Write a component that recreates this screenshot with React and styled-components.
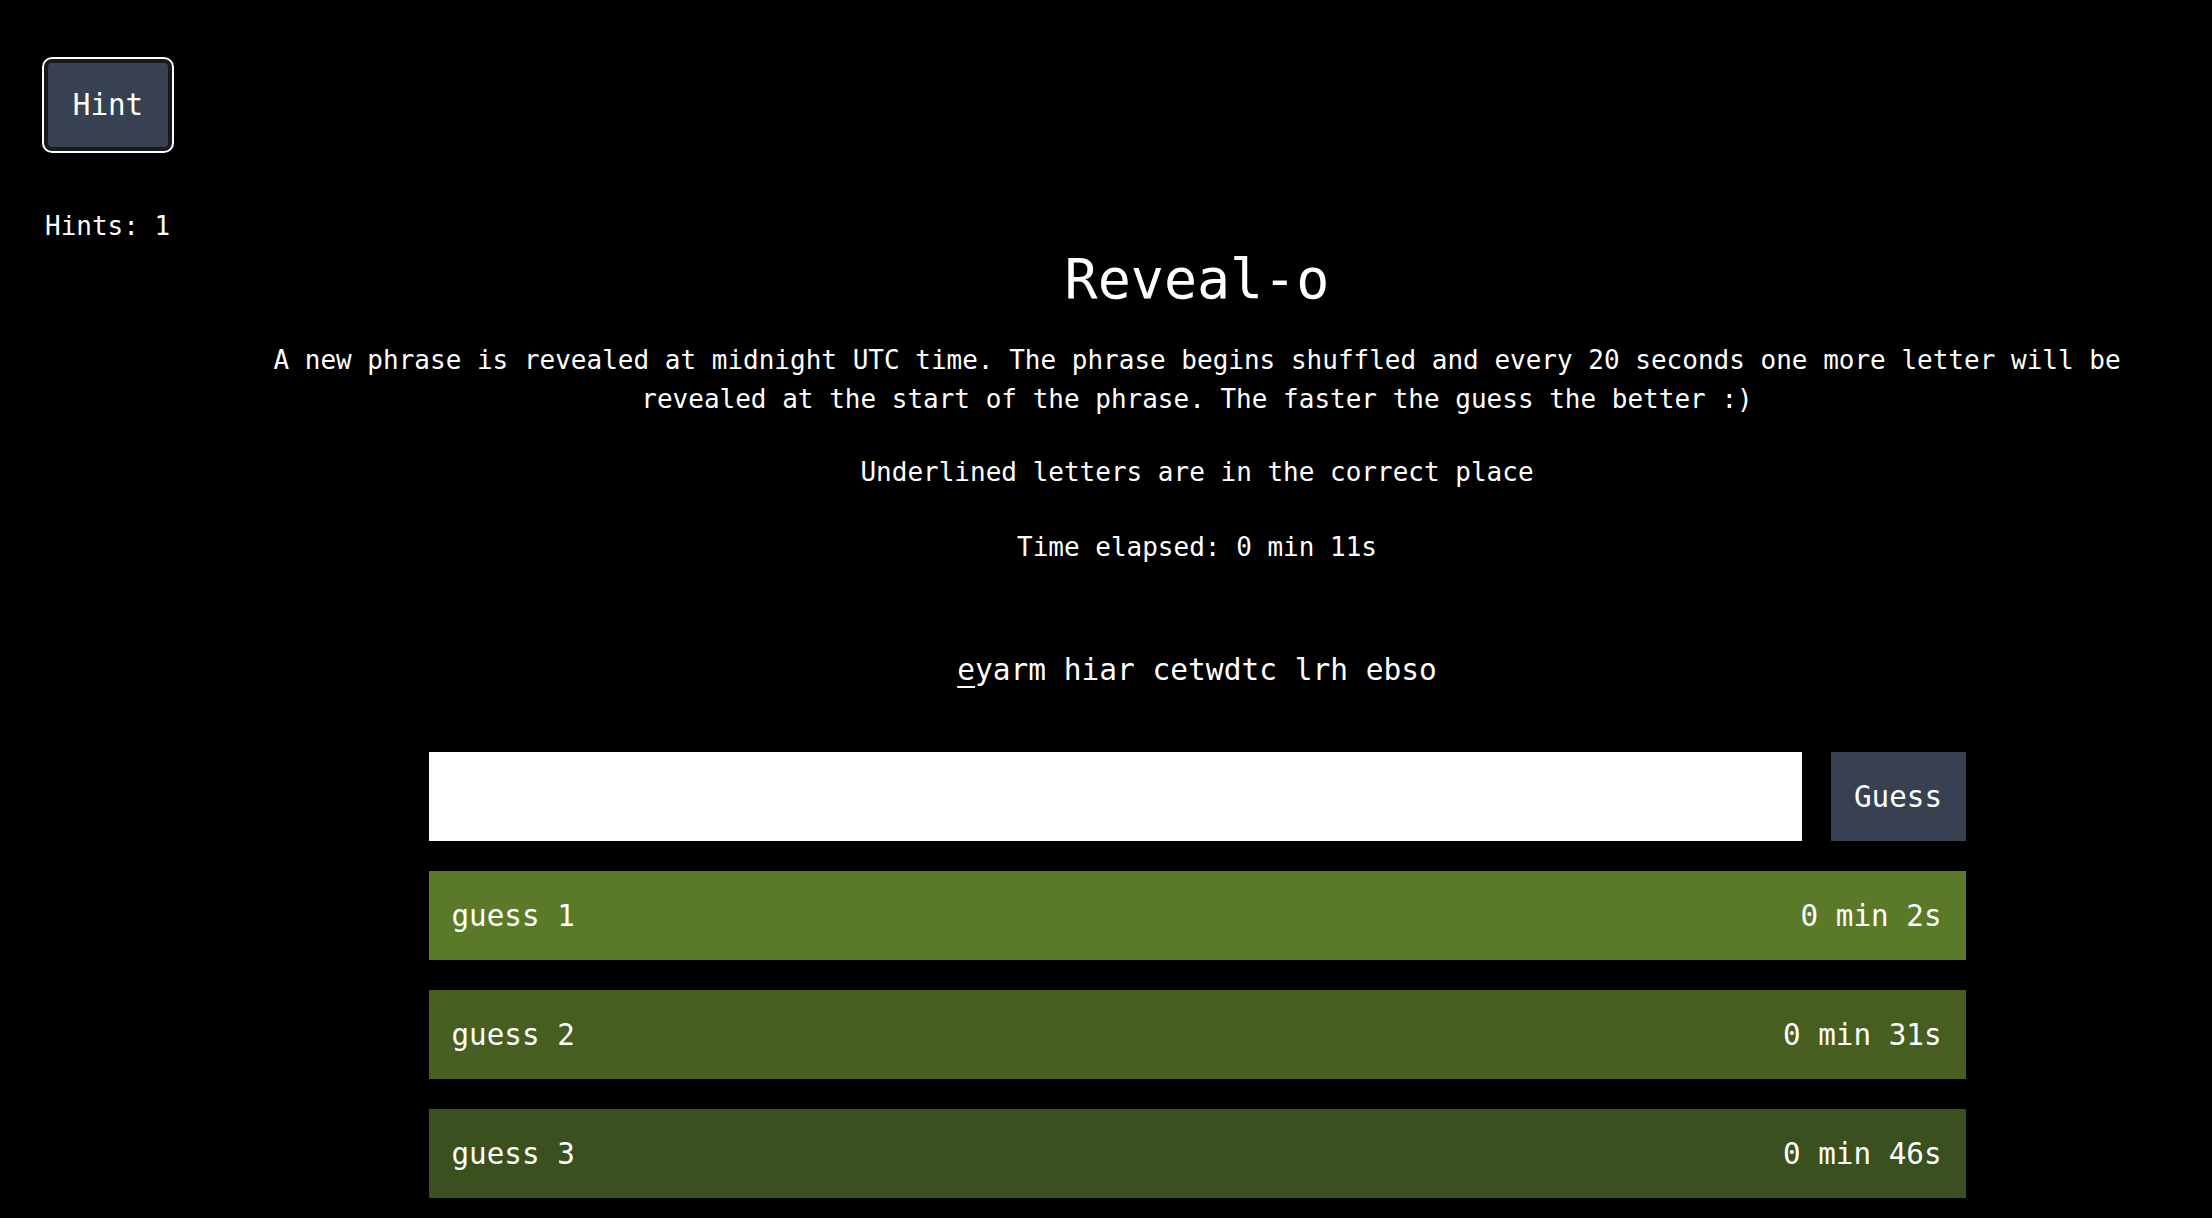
import React from 'react'
import styled, { createGlobalStyle } from 'styled-components'

const GlobalStyle = createGlobalStyle`
    html, body {
        margin: 0;
        padding: 0;
        background: #000000;
        color: #ffffff;
        font-family: "DejaVu Sans Mono", "Liberation Mono", monospace;
    }
`

const Page = styled.div`
    display: flex;
    min-height: 1218px;
    background: #000000;
`

const Sidebar = styled.aside`
    width: 182px;
    flex-shrink: 0;
    box-sizing: border-box;
    padding: 59px 0 0 44px;
    display: flex;
    flex-direction: column;
    align-items: flex-start;
`

const HintButton = styled.button`
    width: 128px;
    height: 92px;
    box-sizing: border-box;
    background: #374151;
    color: #ffffff;
    border: 4px solid #1a1a1c;
    border-radius: 8px;
    box-shadow: 0 0 0 2px #ffffff;
    font-family: inherit;
    font-size: 29.25px;
    cursor: pointer;
`

const HintCount = styled.div`
    margin-top: 56px;
    margin-left: 1px;
    font-size: 26px;
    line-height: 39px;
`

const Main = styled.main`
    flex: 1;
    box-sizing: border-box;
    padding: 246px 64px 0;
    display: flex;
    flex-direction: column;
    align-items: center;
    text-align: center;
`

const Title = styled.h1`
    margin: 0;
    font-size: 55px;
    line-height: 66px;
    font-weight: normal;
`

const Paragraph = styled.p`
    margin: ${p => p.$top}px 0 0;
    font-size: 26px;
    line-height: 39px;
`

const Phrase = styled.div`
    margin-top: 81px;
    font-size: 29.5px;
    line-height: 44px;
`

const Correct = styled.span`
    text-decoration: underline;
    text-underline-offset: 6px;
    text-decoration-thickness: 2px;
`

const Board = styled.div`
    width: 1537px;
    margin-top: 60px;
    display: flex;
    flex-direction: column;
    gap: 30px;
`

const GuessForm = styled.form`
    display: flex;
    gap: 29px;
    height: 89px;
    margin: 0;
`

const GuessInput = styled.input`
    flex: 1;
    border: none;
    outline: none;
    background: #ffffff;
    font-family: inherit;
    font-size: 29.25px;
    padding: 0 22px;
`

const GuessButton = styled.button`
    width: 135px;
    border: none;
    background: #374151;
    color: #ffffff;
    font-family: inherit;
    font-size: 29.25px;
    cursor: pointer;
`

const GuessRow = styled.div`
    height: 89px;
    box-sizing: border-box;
    padding: 0 24px 0 23px;
    display: flex;
    align-items: center;
    justify-content: space-between;
    background: ${p => p.$bg};
    font-size: 29.25px;
`

const guesses = [
    { text: 'guess 1', time: '0 min 2s', bg: '#5a7a29' },
    { text: 'guess 2', time: '0 min 31s', bg: '#475e21' },
    { text: 'guess 3', time: '0 min 46s', bg: '#3b501f' },
]

export default function App() {
    return (
        <Page>
            <GlobalStyle />
            <Sidebar>
                <HintButton>Hint</HintButton>
                <HintCount>Hints: 1</HintCount>
            </Sidebar>
            <Main>
                <Title>Reveal-o</Title>
                <Paragraph $top={29}>
                    A new phrase is revealed at midnight UTC time. The phrase begins shuffled and every 20 seconds one more letter will be revealed at the start of the phrase. The faster the guess the better :)
                </Paragraph>
                <Paragraph $top={34}>Underlined letters are in the correct place</Paragraph>
                <Paragraph $top={36}>Time elapsed: 0 min 11s</Paragraph>
                <Phrase>
                    <Correct>e</Correct>yarm hiar cetwdtc lrh ebso
                </Phrase>
                <Board>
                    <GuessForm onSubmit={e => e.preventDefault()}>
                        <GuessInput type="text" />
                        <GuessButton type="submit">Guess</GuessButton>
                    </GuessForm>
                    {guesses.map(g => (
                        <GuessRow key={g.text} $bg={g.bg}>
                            <span>{g.text}</span>
                            <span>{g.time}</span>
                        </GuessRow>
                    ))}
                </Board>
            </Main>
        </Page>
    )
}
